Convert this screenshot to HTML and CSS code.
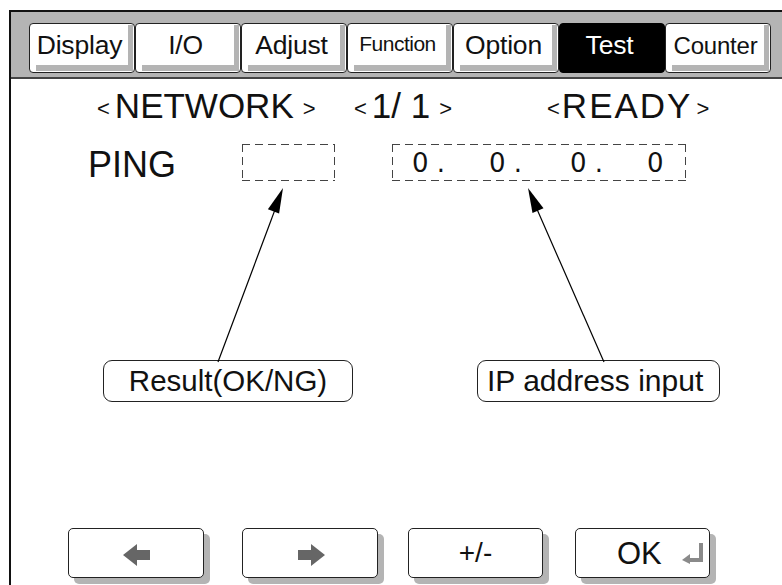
FILE: index.html
```html
<!DOCTYPE html>
<html>
<head>
<meta charset="utf-8">
<link rel="stylesheet" href="styles.css">
</head>
<body>
<div class="page">
  <div class="frame">
    <div class="header">
      <div class="tab">Display</div>
      <div class="tab">I/O</div>
      <div class="tab">Adjust</div>
      <div class="tab tab-fn">Function</div>
      <div class="tab">Option</div>
      <div class="tab tab-active">Test</div>
      <div class="tab tab-counter">Counter</div>
    </div>
    <div class="main">
      <div class="titles">
        <div class="t-net"><span class="ch chl">&lt;</span>NETWORK<span class="ch chr">&gt;</span></div>
        <div class="t-page"><span class="ch chl">&lt;</span>1/ 1<span class="ch chr2">&gt;</span></div>
        <div class="t-ready"><span class="ch chl2">&lt;</span><span class="ready">READY</span><span class="ch chr3">&gt;</span></div>
      </div>
      <div class="ping-row">
        <div class="ping-label">PING</div>
        <div class="dash result-field"></div>
        <div class="dash ip-field">
          <span class="oct o1">0 .</span><span class="oct o2">0 .</span><span class="oct o3">0 .</span><span class="oct">0</span>
        </div>
      </div>
      <div class="callouts">
        <div class="callout c-result">Result(OK/NG)</div>
        <div class="callout c-ip">IP address input</div>
      </div>
      <div class="buttons">
        <div class="btn b1">
          <svg width="28" height="24" viewBox="0 0 28 24"><polygon points="0,12 14,1 14,7 27,7 27,17 14,17 14,23" fill="#666"/></svg>
        </div>
        <div class="btn b2">
          <svg width="28" height="24" viewBox="0 0 28 24"><polygon points="28,12 14,1 14,7 1,7 1,17 14,17 14,23" fill="#666"/></svg>
        </div>
        <div class="btn b3">+/-</div>
        <div class="btn b4"><span class="ok">OK</span>
          <svg class="enter" width="23" height="22" viewBox="0 0 23 22"><polyline points="19,1 19,18 6,18" fill="none" stroke="#8a8a8a" stroke-width="4"/><polygon points="0,18 8,12 8,22" fill="#8a8a8a"/></svg>
        </div>
      </div>
    </div>
  </div>
  <svg class="arrows" width="782" height="585" viewBox="0 0 782 585">
    <line x1="218" y1="362" x2="276" y2="207" stroke="#000" stroke-width="1.2"/>
    <polygon points="283,188 279.1,213.4 267.9,209.2" fill="#000"/>
    <line x1="604" y1="362" x2="536" y2="207" stroke="#000" stroke-width="1.2"/>
    <polygon points="528,188 543.5,208.3 532.5,213.1" fill="#000"/>
  </svg>
</div>
</body>
</html>
```

FILE: styles.css
```css
html, body {
  margin: 0;
  padding: 0;
  background: #fff;
}
.page {
  position: relative;
  width: 782px;
  height: 585px;
  overflow: hidden;
  font-family: "Liberation Sans", Arial, sans-serif;
  color: #111;
}
.frame {
  margin: 10px 0 0 9px;
  border-left: 2px solid #111;
  border-top: 2px solid #111;
  height: 600px;
}
.header {
  height: 67px;
  background: #b4b4b4;
  border-bottom: 2px solid #444;
  display: flex;
  padding: 11px 0 0 18px;
  box-sizing: border-box;
}
.tab {
  position: relative;
  width: 106px;
  height: 50px;
  box-sizing: border-box;
  border: 1px solid #222;
  border-radius: 4px;
  background: #fff;
  font-size: 26.5px;
  line-height: 43px;
  text-align: center;
  padding-right: 5px;
  letter-spacing: -0.2px;
}
.tab::after {
  content: "";
  position: absolute;
  left: 6px;
  top: 1px;
  right: 1px;
  bottom: 1px;
  border-right: 5px solid #b4b4b4;
  border-bottom: 6px solid #b4b4b4;
  pointer-events: none;
}
.tab-fn {
  font-size: 21px;
  line-height: 40px;
  letter-spacing: -0.5px;
}
.tab-counter {
  font-size: 24px;
}
.tab-active {
  background: #000;
  color: #fff;
  border-color: #000;
}
.tab-active::after {
  border-color: #000;
}
.main {
  display: flex;
  flex-direction: column;
}
.titles {
  margin-top: 7px;
  display: flex;
  padding-left: 86px;
  font-size: 35px;
  line-height: 40px;
  height: 40px;
}
.ch {
  font-size: 22px;
  vertical-align: 2px;
}
.chl { margin-right: 5px; }
.chl2 { margin-right: 2px; }
.chr { margin-left: 9px; }
.chr2 { margin-left: 9px; }
.chr3 { margin-left: 4px; }
.ready { letter-spacing: 2px; }
.t-net { width: 257px; }
.t-page { width: 193px; }
.ping-row {
  margin-top: 18px;
  display: flex;
  height: 37px;
  padding-left: 77px;
}
.ping-label {
  width: 154px;
  font-size: 36px;
  line-height: 37px;
  padding-top: 2px;
}
.dash {
  height: 37px;
  box-sizing: border-box;
  background:
    repeating-linear-gradient(90deg, #444 0 8px, transparent 8px 13px) left top / 100% 1px no-repeat,
    repeating-linear-gradient(90deg, #444 0 8px, transparent 8px 13px) left bottom / 100% 1px no-repeat,
    repeating-linear-gradient(180deg, #444 0 8px, transparent 8px 13px) left top / 1px 100% no-repeat,
    repeating-linear-gradient(180deg, #444 0 8px, transparent 8px 13px) right top / 1px 100% no-repeat;
}
.result-field {
  width: 93px;
}
.ip-field {
  margin-left: 57px;
  width: 294px;
  display: flex;
  padding-left: 20px;
  font-family: "DejaVu Sans", sans-serif;
  font-size: 26px;
  line-height: 39px;
  color: #111;
}
.oct { white-space: pre; }
.o1 { width: 77px; }
.o2 { width: 81px; }
.o3 { width: 77px; }
.callouts {
  margin-top: 179px;
  display: flex;
  padding-left: 92px;
}
.callout {
  height: 42px;
  box-sizing: border-box;
  border: 1px solid #222;
  border-radius: 9px;
  font-size: 29.5px;
  line-height: 40px;
}
.c-result {
  width: 250px;
  text-align: center;
}
.c-ip {
  margin-left: 124px;
  width: 243px;
  padding-left: 9px;
  font-size: 30px;
}
.buttons {
  margin-top: 126px;
  display: flex;
  padding-left: 57px;
}
.btn {
  height: 50px;
  box-sizing: border-box;
  border: 1px solid #222;
  border-radius: 5px;
  background: #fff;
  box-shadow: 6px 6px 0 #b4b4b4;
  display: flex;
  align-items: center;
  justify-content: center;
}
.b1 { width: 136px; }
.b2 { width: 136px; margin-left: 38px; }
.b3 { width: 135px; margin-left: 30px; font-size: 28px; }
.b4 {
  width: 135px;
  margin-left: 32px;
  font-size: 31px;
  justify-content: flex-start;
  padding-left: 41px;
}
.b1 svg { margin-left: 2px; margin-top: 4px; }
.b2 svg { margin-left: 2px; margin-top: 4px; }
.ok { margin-top: 2px; }
.enter { margin-left: 20px; margin-top: 0; }
.arrows {
  position: absolute;
  left: 0;
  top: 0;
  pointer-events: none;
}
```
